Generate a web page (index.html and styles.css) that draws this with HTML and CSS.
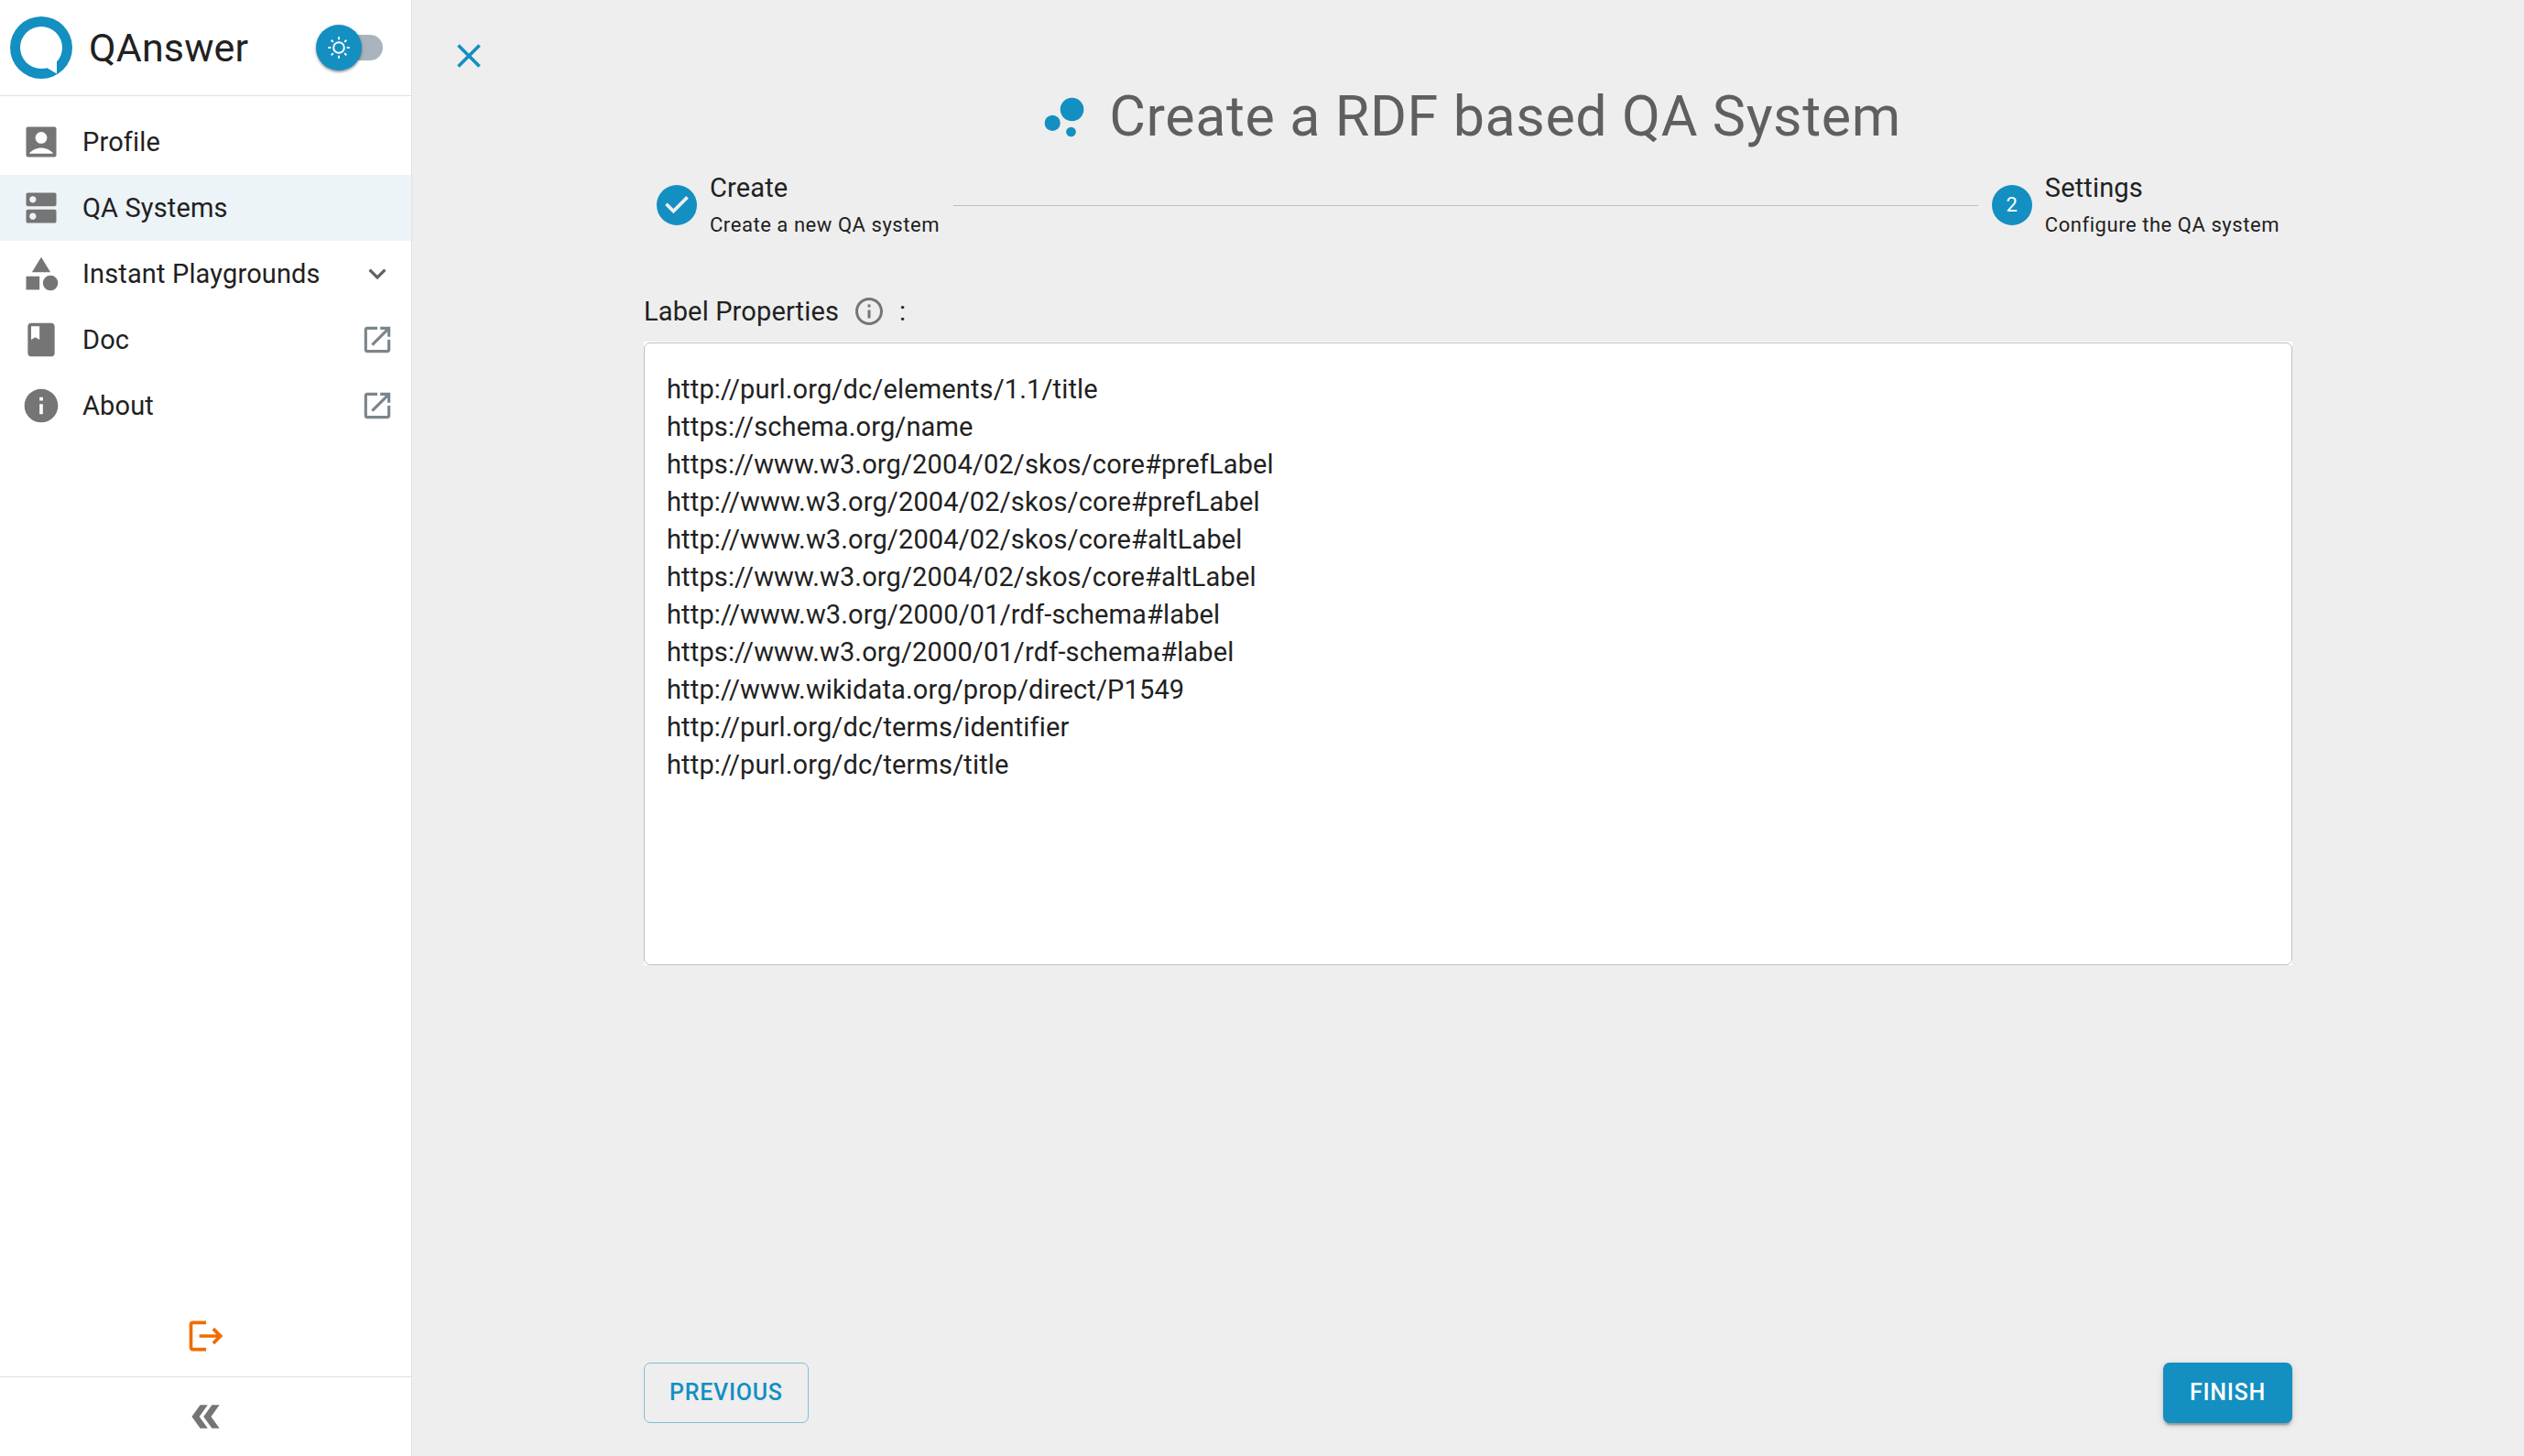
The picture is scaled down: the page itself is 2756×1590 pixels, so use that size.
FILE: index.html
```html
<!DOCTYPE html>
<html lang="en">
<head>
  <meta charset="utf-8">
  <meta name="viewport" content="width=device-width, initial-scale=1">
  <title>QAnswer</title>
  <link rel="stylesheet" href="styles.css">
</head>
<body>
  <div class="app">
    <aside class="sidebar">
      <header class="brand">
        <svg class="brand-logo" viewBox="0 0 68 68" aria-hidden="true">
          <circle cx="34" cy="34" r="34" fill="#148fc1"/>
          <circle cx="34" cy="34" r="23" fill="#fff"/>
          <path d="M51 46v16.500L40 56l-4 1z" fill="#fff"/>
        </svg>
        <span class="brand-name">QAnswer</span>
        <label class="switch">
          <input class="switch-input" type="checkbox" role="switch" aria-label="Dark mode">
          <span class="switch-thumb">
            <svg class="sun" viewBox="0 0 20 20" aria-hidden="true"><path d="M9.305 1.667V3.75h1.389V1.667h-1.39zm-4.707 1.95l-.982.982L5.09 6.072l.982-.982-1.473-1.473zm10.802 0L13.927 5.09l.982.982 1.473-1.473-.982-.982zM10 5.139a4.872 4.872 0 00-4.862 4.86A4.872 4.872 0 0010 14.862 4.872 4.872 0 0014.86 10 4.872 4.872 0 0010 5.139zm0 1.389A3.462 3.462 0 0113.471 10a3.462 3.462 0 01-3.473 3.472A3.462 3.462 0 016.527 10 3.462 3.462 0 0110 6.528zM1.665 9.305v1.39h2.083v-1.39H1.666zm14.583 0v1.39h2.084v-1.39h-2.084zM5.09 13.928L3.616 15.4l.982.982 1.473-1.473-.982-.982zm9.82 0l-.982.982 1.473 1.473.982-.982-1.473-1.473zM9.305 16.25v2.083h1.389V16.25h-1.39z"/></svg>
          </span>
        </label>
      </header>

      <nav class="nav">
        <a class="nav-item" href="#profile">
          <svg class="icon" viewBox="0 0 24 24" aria-hidden="true"><path fill-rule="evenodd" d="M4.200 3h15.600C20.500 3 21 3.500 21 4.200v15.600c0 .7-.5 1.200-1.200 1.200H4.200C3.500 21 3 20.500 3 19.800V4.200C3 3.500 3.500 3 4.200 3zM12 6a3.500 3.500 0 1 0 0 7 3.500 3.500 0 0 0 0-7zm7 13v-.3c-1.500-2-4.300-3.200-7-3.200s-5.500 1.200-7 3.200v.3z"/></svg>
          <span class="nav-text">Profile</span>
        </a>
        <a class="nav-item is-active" href="#systems" aria-current="page">
          <svg class="icon" viewBox="0 0 24 24" aria-hidden="true"><path d="M20 13H4c-.55 0-1 .45-1 1v6c0 .55.45 1 1 1h16c.55 0 1-.45 1-1v-6c0-.55-.45-1-1-1zM7 19c-1.100 0-2-.9-2-2s.9-2 2-2 2 .9 2 2-.9 2-2 2zM20 3H4c-.55 0-1 .45-1 1v6c0 .55.45 1 1 1h16c.55 0 1-.45 1-1V4c0-.55-.45-1-1-1zM7 9c-1.100 0-2-.9-2-2s.9-2 2-2 2 .9 2 2-.9 2-2 2z"/></svg>
          <span class="nav-text">QA Systems</span>
        </a>
        <a class="nav-item" href="#playgrounds">
          <svg class="icon" viewBox="0 0 24 24" aria-hidden="true"><path d="M12 2l-5.500 9h11z"/><circle cx="17.500" cy="17.500" r="4.500"/><path d="M3 13.500h8v8H3z"/></svg>
          <span class="nav-text">Instant Playgrounds</span>
          <svg class="icon-end" viewBox="0 0 24 24" aria-hidden="true"><path d="M7.410 8.590L12 13.170l4.590-4.580L18 10l-6 6-6-6z" fill="#616161"/></svg>
        </a>
        <a class="nav-item" href="#doc">
          <svg class="icon" viewBox="0 0 24 24" aria-hidden="true"><path fill-rule="evenodd" d="M18 2H6c-1.100 0-2 .9-2 2v16c0 1.100.9 2 2 2h12c1.100 0 2-.9 2-2V4c0-1.100-.9-2-2-2zM6 4h5v8l-2.500-1.500L6 12V4z"/></svg>
          <span class="nav-text">Doc</span>
          <svg class="icon-end" viewBox="0 0 24 24" aria-hidden="true"><path d="M19 19H5V5h7V3H5c-1.110 0-2 .9-2 2v14c0 1.100.89 2 2 2h14c1.100 0 2-.9 2-2v-7h-2v7zM14 3v2h3.590l-9.830 9.830 1.410 1.410L19 6.410V10h2V3h-7z"/></svg>
        </a>
        <a class="nav-item" href="#about">
          <svg class="icon" viewBox="0 0 24 24" aria-hidden="true"><path d="M12 2C6.480 2 2 6.480 2 12s4.480 10 10 10 10-4.480 10-10S17.520 2 12 2zm1 15h-2v-6h2v6zm0-8h-2V7h2v2z"/></svg>
          <span class="nav-text">About</span>
          <svg class="icon-end" viewBox="0 0 24 24" aria-hidden="true"><path d="M19 19H5V5h7V3H5c-1.110 0-2 .9-2 2v14c0 1.100.89 2 2 2h14c1.100 0 2-.9 2-2v-7h-2v7zM14 3v2h3.590l-9.830 9.830 1.410 1.410L19 6.410V10h2V3h-7z"/></svg>
        </a>
      </nav>

      <button class="side-button logout" type="button" aria-label="Log out">
        <svg class="icon" viewBox="0 0 24 24" aria-hidden="true"><path d="M17 7l-1.410 1.410L18.170 11H8v2h10.170l-2.580 2.580L17 17l5-5zM4 5h8V3H4c-1.100 0-2 .9-2 2v14c0 1.100.9 2 2 2h8v-2H4V5z"/></svg>
      </button>
      <button class="side-button collapse" type="button" aria-label="Collapse menu">
        <svg class="icon" viewBox="0 0 24 24" aria-hidden="true"><path d="M8.500 19H13l-5-7 5-7H8.500l-5 7zM15.500 19H20l-5-7 5-7h-4.500l-5 7z"/></svg>
      </button>
    </aside>

    <main class="main">
      <button class="close" type="button" aria-label="Close">
        <svg class="icon" viewBox="0 0 24 24" aria-hidden="true"><path d="M19 6.410L17.590 5 12 10.590 6.410 5 5 6.410 10.590 12 5 17.590 6.410 19 12 13.410 17.590 19 19 17.590 13.410 12z"/></svg>
      </button>

      <div class="content">
        <h1 class="title">
          <svg class="title-icon" viewBox="0 0 24 24" aria-hidden="true"><circle cx="7.200" cy="14.400" r="3.200"/><circle cx="14.800" cy="18" r="2"/><circle cx="15.200" cy="8.800" r="4.800"/></svg>
          Create a RDF based QA System
        </h1>

        <ol class="stepper">
          <li class="step">
            <span class="step-badge">
              <svg class="step-check" viewBox="0 0 24 24" aria-label="Completed"><path d="M10 17l-5-5 1.400-1.400 3.600 3.600 7.600-7.600L19 8l-9 9z"/></svg>
            </span>
            <span class="step-label">
              <span class="step-name">Create</span>
              <span class="step-hint">Create a new QA system</span>
            </span>
          </li>
          <li class="step-line" aria-hidden="true"></li>
          <li class="step" aria-current="step">
            <span class="step-badge">2</span>
            <span class="step-label">
              <span class="step-name">Settings</span>
              <span class="step-hint">Configure the QA system</span>
            </span>
          </li>
        </ol>

        <label class="field-label" for="label-properties">
          Label Properties
          <svg class="info" viewBox="0 0 24 24" aria-hidden="true"><path d="M11 7h2v2h-2zm0 4h2v6h-2zm1-9C6.480 2 2 6.480 2 12s4.480 10 10 10 10-4.480 10-10S17.520 2 12 2zm0 18c-4.410 0-8-3.590-8-8s3.590-8 8-8 8 3.590 8 8-3.590 8-8 8z"/></svg>
          :
        </label>
        <div class="field">
          <textarea class="field-input" id="label-properties" rows="15" spellcheck="false">http://purl.org/dc/elements/1.1/title
https://schema.org/name
https://www.w3.org/2004/02/skos/core#prefLabel
http://www.w3.org/2004/02/skos/core#prefLabel
http://www.w3.org/2004/02/skos/core#altLabel
https://www.w3.org/2004/02/skos/core#altLabel
http://www.w3.org/2000/01/rdf-schema#label
https://www.w3.org/2000/01/rdf-schema#label
http://www.wikidata.org/prop/direct/P1549
http://purl.org/dc/terms/identifier
http://purl.org/dc/terms/title</textarea>
        </div>

        <div class="actions">
          <button class="button button-outlined" type="button">PREVIOUS</button>
          <button class="button button-filled" type="button">FINISH</button>
        </div>
      </div>
    </main>
  </div>
</body>
</html>
```

FILE: styles.css
```css
:root {
  --primary: #148fc1;
  --text: #212121;
  --muted: #757575;
  --divider: #e0e0e0;
}

*,
*::before,
*::after {
  box-sizing: border-box;
}

body {
  margin: 0;
  background: #eee;
  color: var(--text);
  font: 400 29px/40px Roboto, "Liberation Sans", sans-serif;
  letter-spacing: 0.005em;
}

button {
  border: 0;
  padding: 0;
  background: none;
  font: inherit;
  cursor: pointer;
}

svg {
  display: block;
  flex: none;
  fill: currentColor;
}

.icon {
  width: 44px;
  height: 44px;
}

.app {
  display: flex;
  min-height: 100vh;
}

/* Sidebar */

.sidebar {
  display: flex;
  flex: none;
  flex-direction: column;
  width: 450px;
  border-right: 1px solid var(--divider);
  background: #fff;
}

.brand {
  display: flex;
  align-items: center;
  height: 105px;
  padding: 0 31px 0 11px;
  border-bottom: 1px solid var(--divider);
}

.brand-logo {
  width: 68px;
  height: 68px;
}

.brand-name {
  flex: 1;
  margin-left: 18px;
  font-size: 43px;
  line-height: 56px;
}

.switch {
  display: flex;
  align-items: center;
  width: 73px;
  height: 28px;
  border-radius: 14px;
  background: linear-gradient(90deg, transparent 16px, #aab4be 16px);
  cursor: pointer;
}

.switch-input {
  width: 0;
  height: 0;
  margin: 0;
  appearance: none;
}

.switch-thumb {
  display: grid;
  flex: none;
  place-items: center;
  width: 50px;
  height: 50px;
  border-radius: 50%;
  background: var(--primary);
  box-shadow: 0 2px 2px rgba(0, 0, 0, 0.25), 0 1px 4px rgba(0, 0, 0, 0.2);
  color: #fff;
}

.sun {
  width: 28px;
  height: 28px;
}

.nav {
  flex: 1;
  padding-top: 14px;
}

.nav-item {
  display: flex;
  align-items: center;
  height: 72px;
  padding: 0 18px 0 23px;
  color: var(--text);
  text-decoration: none;
}

.nav-item.is-active {
  background: #ecf4f8;
}

.nav-item .icon {
  color: var(--muted);
}

.nav-text {
  flex: 1;
  margin-left: 23px;
}

.icon-end {
  width: 38px;
  height: 38px;
  color: #7b868c;
}

.side-button {
  display: grid;
  place-items: center;
  height: 88px;
  color: var(--muted);
}

.logout {
  color: #ef6c00;
}

.collapse {
  height: 87px;
  border-top: 1px solid var(--divider);
}

/* Main area */

.main {
  display: flex;
  flex: 1;
  flex-direction: column;
  min-width: 0;
  padding: 39px 40px 36px;
}

.close {
  align-self: flex-start;
  color: var(--primary);
}

.content {
  display: flex;
  flex: 1;
  flex-direction: column;
  width: 100%;
  max-width: 1800px;
  margin: 0 auto;
}

.title {
  display: flex;
  align-items: center;
  justify-content: center;
  gap: 17px;
  margin: 7px 0 18px;
  color: #5f5f5f;
  font-size: 61px;
  font-weight: 400;
  line-height: 75px;
  letter-spacing: 0.01em;
}

.title-icon {
  width: 64px;
  height: 64px;
  color: var(--primary);
}

.stepper {
  display: flex;
  align-items: center;
  gap: 15px;
  margin: 0;
  padding: 0 14px;
  list-style: none;
}

.step {
  display: flex;
  align-items: center;
  gap: 14px;
}

.step-badge {
  display: grid;
  place-items: center;
  width: 44px;
  height: 44px;
  border-radius: 50%;
  background: var(--primary);
  color: #fff;
  font-size: 22px;
}

.step-check {
  width: 44px;
  height: 44px;
  color: #eee;
}

.step-label {
  display: flex;
  flex-direction: column;
}

.step-name {
  line-height: 44px;
}

.step-hint {
  font-size: 22px;
  line-height: 38px;
  letter-spacing: 0.025em;
}

.step-line {
  flex: 1;
  height: 1px;
  background: #bdbdbd;
}

.field-label {
  display: flex;
  align-items: center;
  gap: 15px;
  margin-top: 55px;
}

.info {
  width: 36px;
  height: 36px;
  color: var(--muted);
}

.field {
  display: flex;
  margin-top: 13px;
  padding-top: 1px;
  background: #fff;
}

.field-input {
  width: 100%;
  padding: 30px 24px 33px;
  border: 1px solid #c0c0c0;
  border-radius: 7px;
  outline: 0;
  background: #fff;
  color: inherit;
  font: inherit;
  line-height: 41px;
  letter-spacing: inherit;
  resize: none;
}

.actions {
  display: flex;
  justify-content: space-between;
  margin-top: auto;
  padding-top: 36px;
}

.button {
  padding: 0 29px;
  border-radius: 7px;
  font-size: 25px;
  font-weight: 500;
  line-height: 66px;
  letter-spacing: 0.03em;
}

.button-outlined {
  padding: 0 27px;
  border: 1px solid #81bfd8;
  color: var(--primary);
  line-height: 64px;
}

.button-filled {
  background: var(--primary);
  box-shadow: 0 5px 2px -3px rgba(0, 0, 0, 0.2), 0 3px 3px rgba(0, 0, 0, 0.14), 0 2px 9px rgba(0, 0, 0, 0.12);
  color: #fff;
}
```
